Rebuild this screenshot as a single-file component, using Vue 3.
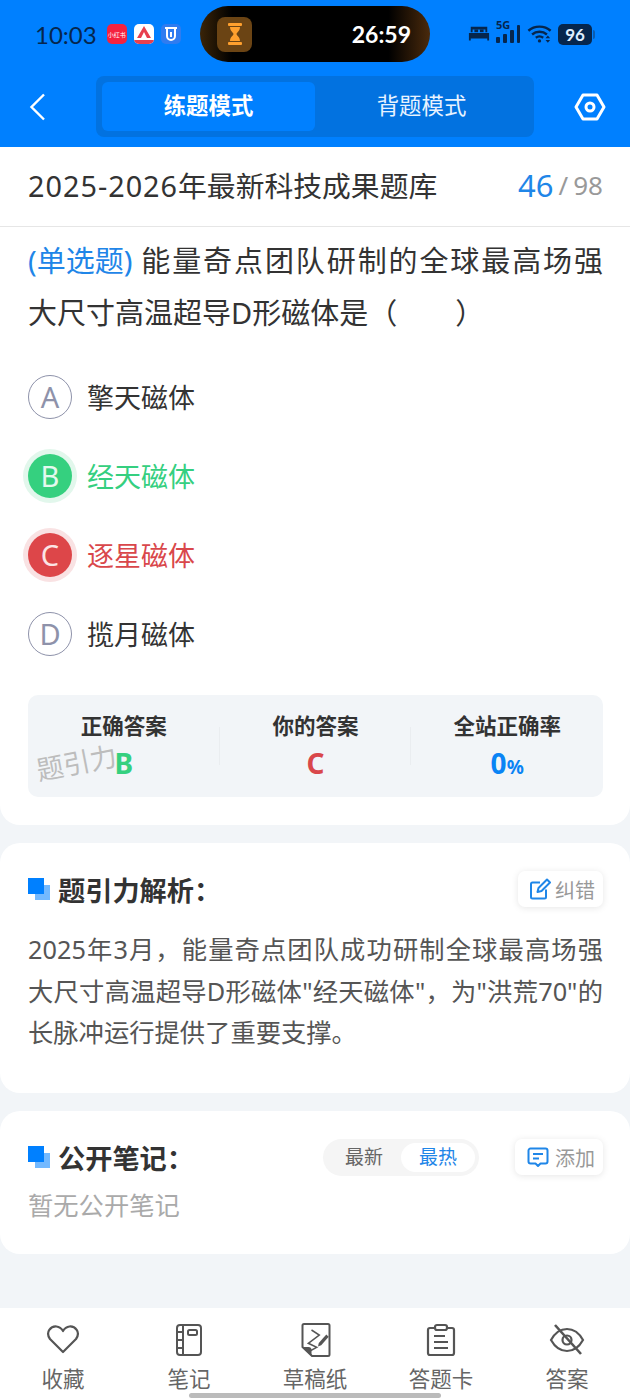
<template>
  <div class="page">
    <header class="header">
      <div class="status">
        <div class="status-left">
          <span class="clock">10:03</span>
          <span class="app app-red">小红书</span>
          <span class="app app-white">
            <svg width="20" height="20" viewBox="0 0 20 20">
              <path d="M3 14 L10 2 L17 14 L13 14 L10 8 L7 14 Z" fill="#e8404f" />
              <rect x="0" y="16" width="20" height="4" fill="#e8404f" />
            </svg>
          </span>
          <span class="app app-blue">
            <svg width="20" height="20" viewBox="0 0 20 20" fill="none" stroke="#fff" stroke-width="2">
              <path d="M4 4h12M6 5v7a4 4 0 0 0 8 0V5" />
              <path d="M10 8v5" />
            </svg>
          </span>
        </div>
        <div class="island">
          <span class="timer-tile">
            <svg width="16" height="22" viewBox="0 0 16 22" fill="#ffa02e">
              <rect x="1" y="0" width="14" height="3" rx="1" />
              <rect x="1" y="19" width="14" height="3" rx="1" />
              <path d="M3 4h10c0 4-3 5-3.500 7 .5 2 3.500 3 3.500 7H3c0-4 3-5 3.500-7C6 9 3 8 3 4z" />
            </svg>
          </span>
          <span class="timer">26:59</span>
        </div>
        <div class="status-right">
          <svg width="22" height="20" viewBox="0 0 24 20" fill="#06264d">
            <path d="M3 2h18v6h-2V5H5v3H3z" />
            <rect x="7" y="5" width="4" height="3" />
            <rect x="13" y="5" width="4" height="3" />
            <path d="M1 9h22v8h-2v-2H3v2H1z" />
          </svg>
          <span class="signal">
            <span class="five-g">5G</span>
            <svg width="25" height="20" viewBox="0 0 25 20" fill="#06264d">
              <rect x="0" y="13" width="4" height="6" rx="1" />
              <rect x="7" y="10" width="4" height="9" rx="1" />
              <rect x="14" y="6" width="4" height="13" rx="1" />
              <rect x="21" y="1" width="3" height="18" rx="1" />
            </svg>
          </span>
          <svg width="25" height="22" viewBox="0 0 27 22" fill="none" stroke="#06264d" stroke-width="2.600">
            <path d="M1.500 7.500C8 1.500 19 1.500 25.500 7.500" />
            <path d="M5.500 11.500c4.500-3.800 11.500-3.800 16 0" />
            <path d="M9.500 15c2.500-1.800 5.500-1.800 8 0" />
            <circle cx="13.500" cy="18.500" r="1.800" fill="#06264d" stroke="none" />
            <path d="M20 15.500l2.500-3 2.500 3zM20 17.500l2.500 3 2.500-3z" fill="#06264d" stroke="none" />
          </svg>
          <span class="battery">96</span>
        </div>
      </div>
      <nav class="nav">
        <button class="icon-btn">
          <svg width="18" height="28" viewBox="0 0 18 28" fill="none" stroke="#fff" stroke-width="2.400">
            <path d="M15 1.500 L2.500 14 L15 26.500" />
          </svg>
        </button>
        <div class="segment">
          <span class="seg-item active">练题模式</span>
          <span class="seg-item">背题模式</span>
        </div>
        <button class="icon-btn">
          <svg width="32" height="28" viewBox="0 0 32 28" fill="none" stroke="#fff" stroke-width="3">
            <path d="M9 2h14l7 12-7 12H9L2 14z" stroke-linejoin="round" />
            <circle cx="16" cy="14" r="4" />
          </svg>
        </button>
      </nav>
    </header>

    <section class="card question-card">
      <div class="title-row">
        <h1><span class="nums">2025-2026</span>年最新科技成果题库</h1>
        <div class="progress"><b>46</b><i>/</i><span>98</span></div>
      </div>
      <div class="question">
        <p class="stem"><span class="kind">(单选题)</span>能量奇点团队研制的全球最高场强大尺寸高温超导D形磁体是（&emsp;&emsp;）</p>
        <ul class="options">
          <li v-for="o in options" :key="o.key" class="option" :class="o.state">
            <span class="dot">{{ o.key }}</span>
            <span>{{ o.text }}</span>
          </li>
        </ul>
        <div class="stats">
          <span class="watermark">题引力</span>
          <div class="stat">
            <label>正确答案</label>
            <strong class="green">B</strong>
          </div>
          <div class="stat">
            <label>你的答案</label>
            <strong class="red">C</strong>
          </div>
          <div class="stat">
            <label>全站正确率</label>
            <strong class="blue">0<small>%</small></strong>
          </div>
        </div>
      </div>
    </section>

    <section class="card analysis">
      <div class="card-head">
        <h2><span class="mark"></span>题引力解析：</h2>
        <button class="mini-btn">
          <svg width="22" height="22" viewBox="0 0 22 22" fill="none" stroke="#1f86e8" stroke-width="2">
            <path d="M17 11.500V19a1.500 1.500 0 0 1-1.500 1.500h-12A1.500 1.500 0 0 1 2 19V6a1.500 1.500 0 0 1 1.500-1.500H11" />
            <path d="M8.500 14l1-4L18 1.500l3 3L12.500 13z" stroke-linejoin="round" />
          </svg>
          纠错
        </button>
      </div>
      <p class="analysis-text">2025年3月，能量奇点团队成功研制全球最高场强大尺寸高温超导D形磁体"经天磁体"，为"洪荒70"的长脉冲运行提供了重要支撑。</p>
    </section>

    <section class="card notes">
      <div class="card-head">
        <h2><span class="mark"></span>公开笔记：</h2>
        <div class="head-right">
          <div class="sort">
            <span>最新</span>
            <span class="on">最热</span>
          </div>
          <button class="mini-btn add-btn">
            <svg width="22" height="22" viewBox="0 0 22 22" fill="none" stroke="#1f86e8" stroke-width="2">
              <path d="M3.500 2.500h15a2 2 0 0 1 2 2v11a2 2 0 0 1-2 2h-5l-2.500 2.500-2.500-2.500h-5a2 2 0 0 1-2-2v-11a2 2 0 0 1 2-2z" stroke-linejoin="round" />
              <path d="M6 8h10M6 12.500h6" />
            </svg>
            添加
          </button>
        </div>
      </div>
      <p class="empty">暂无公开笔记</p>
    </section>

    <footer class="tabbar">
      <div class="tab">
        <svg width="34" height="34" viewBox="0 0 34 34" fill="none" stroke="#555" stroke-width="2.200">
          <path d="M17 29 L4 16 C-1 9 5 3 10.500 3.500 C13.500 3.800 15.500 5.500 17 8 C18.500 5.500 20.500 3.800 23.500 3.500 C29 3 35 9 30 16 Z" stroke-linejoin="round" />
        </svg>
        <span>收藏</span>
      </div>
      <div class="tab">
        <svg width="34" height="34" viewBox="0 0 34 34" fill="none" stroke="#555" stroke-width="2">
          <rect x="5" y="2" width="24" height="30" rx="3" />
          <path d="M11 2v30M5 9h6M5 17h6M5 25h6" />
          <rect x="16" y="7" width="9" height="5" rx="1.500" />
        </svg>
        <span>笔记</span>
      </div>
      <div class="tab">
        <svg width="34" height="34" viewBox="0 0 34 34" fill="none" stroke="#555" stroke-width="2">
          <path d="M6 1h24a1.500 1.500 0 0 1 1.500 1.500v29a1.500 1.500 0 0 1-1.500 1.500H14L4.500 24V2.500A1.500 1.500 0 0 1 6 1z" stroke-linejoin="round" />
          <path d="M4.500 24h6a3 3 0 0 1 3 3v6z" fill="#555" stroke="none" />
          <path d="M13.500 7 L21.300 12 L10.300 20.300 L18.700 24.300 L10 29" stroke-width="1.500" />
          <path d="M20 23.500l.8-3.500 7.500-8.500 2.400 2.200-7.500 8.500z" fill="#555" stroke="none" />
        </svg>
        <span>草稿纸</span>
      </div>
      <div class="tab">
        <svg width="34" height="34" viewBox="0 0 34 34" fill="none" stroke="#555" stroke-width="2.200">
          <path d="M10 5H6a2 2 0 0 0-2 2v23a2 2 0 0 0 2 2h22a2 2 0 0 0 2-2V7a2 2 0 0 0-2-2h-4" />
          <rect x="11" y="2" width="12" height="5" rx="2" />
          <path d="M10 13h11M10 19h14M10 25h14" />
        </svg>
        <span>答题卡</span>
      </div>
      <div class="tab">
        <svg width="36" height="34" viewBox="0 0 36 34" fill="none" stroke="#555" stroke-width="2.200">
          <path d="M2 17C7 8 12 6 18 6s11 2 16 11c-5 9-10 11-16 11S7 26 2 17z" />
          <circle cx="18" cy="17" r="4.500" />
          <path d="M6 2 L32 31" stroke-width="2.600" />
        </svg>
        <span>答案</span>
      </div>
      <span class="home-bar"></span>
    </footer>
  </div>
</template>

<script setup>
const options = [
  { key: 'A', text: '擎天磁体', state: '' },
  { key: 'B', text: '经天磁体', state: 'right' },
  { key: 'C', text: '逐星磁体', state: 'wrong' },
  { key: 'D', text: '揽月磁体', state: '' }
]
</script>

<style>
html, body {
  margin: 0;
  background: #f2f5f8;
}
</style>

<style scoped>
.page {
  position: relative;
  width: 630px;
  height: 1400px;
  overflow: hidden;
  display: flex;
  flex-direction: column;
  background: #f2f5f8;
  color: #333;
  font-family: "Noto Sans", "Noto Sans CJK SC", sans-serif;
}

.header {
  height: 147px;
  flex-shrink: 0;
  background: #0080ff;
}

.status {
  height: 76px;
  box-sizing: border-box;
  padding: 6px 38px 0 35px;
  display: flex;
  align-items: flex-start;
}

.status-left {
  flex: 0 0 165px;
  height: 56px;
  display: flex;
  align-items: center;
  font-family: Lato, sans-serif;
}

.clock {
  font-size: 24px;
  color: #06264d;
  margin-right: 10px;
  white-space: nowrap;
}

.app {
  width: 20px;
  height: 20px;
  margin-right: 7px;
  border-radius: 5px;
  flex-shrink: 0;
  overflow: hidden;
  display: flex;
  align-items: center;
  justify-content: center;
}

.app-red {
  background: #f5223f;
  color: #fff;
  font-size: 6px;
  white-space: nowrap;
  font-family: "Noto Sans CJK SC", sans-serif;
}

.app-white {
  background: #fff;
}

.app-blue {
  background: #2f7cf0;
}

.island {
  width: 230px;
  height: 56px;
  box-sizing: border-box;
  padding: 0 19px 0 17px;
  border-radius: 28px;
  background: linear-gradient(90deg, #3a2408 0, #000 14%, #000 82%, #4a2a0c 100%);
  display: flex;
  align-items: center;
  justify-content: space-between;
}

.timer-tile {
  width: 35px;
  height: 35px;
  border-radius: 8px;
  background: #6b4414;
  display: flex;
  align-items: center;
  justify-content: center;
}

.timer {
  font-family: Lato, sans-serif;
  font-size: 23px;
  font-weight: 700;
  color: #fff;
}

.status-right {
  height: 56px;
  margin-left: auto;
  display: flex;
  align-items: center;
  gap: 6px;
}

.signal {
  position: relative;
  display: flex;
}

.five-g {
  position: absolute;
  left: 0;
  top: -7px;
  font-size: 11px;
  font-weight: 700;
  color: #06264d;
}

.battery {
  position: relative;
  width: 34px;
  height: 21px;
  border-radius: 5px;
  background: #06264d;
  color: #dfeeff;
  font-family: Lato, sans-serif;
  font-size: 17px;
  font-weight: 700;
  line-height: 21px;
  text-align: center;
}

.battery::after {
  content: '';
  position: absolute;
  right: -3px;
  top: 6px;
  width: 2px;
  height: 9px;
  border-radius: 0 2px 2px 0;
  background: #0a5cb0;
}

.nav {
  height: 61px;
  display: flex;
  align-items: center;
  justify-content: space-between;
  padding: 0 25px 0 29px;
}

.icon-btn {
  padding: 0;
  border: 0;
  background: none;
  display: flex;
}

.segment {
  width: 438px;
  height: 61px;
  box-sizing: border-box;
  margin-left: 49px;
  margin-right: 40px;
  padding: 6px;
  flex-shrink: 0;
  border-radius: 8px;
  background: #0272e0;
  display: flex;
}

.seg-item {
  flex: 1;
  border-radius: 6px;
  color: #e8f3ff;
  font-size: 22.400px;
  line-height: 47px;
  text-align: center;
}

.seg-item.active {
  background: #0080ff;
  color: #fff;
  font-weight: 700;
}

.card {
  background: #fff;
  border-radius: 20px;
}

.question-card {
  height: 678px;
  flex-shrink: 0;
  border-radius: 0 0 20px 20px;
}

.title-row {
  height: 80px;
  box-sizing: border-box;
  padding: 0 27px 4px 28px;
  border-bottom: 1px solid #e6e6e6;
  display: flex;
  align-items: center;
  justify-content: space-between;
}

h1 {
  margin: 0;
  font-size: 28.800px;
  font-weight: 400;
  color: #333;
}

.nums {
  letter-spacing: 1px;
}

.progress {
  display: flex;
  align-items: center;
  color: #999;
  font-size: 26px;
}

.progress b {
  font-size: 31px;
  font-weight: 400;
  color: #1f86e8;
}

.progress i {
  margin: 0 5px;
  font-style: normal;
}

.question {
  padding: 8px 27px 0 28px;
}

.stem {
  margin: 0;
  font-size: 29px;
  line-height: 52px;
  text-align: justify;
  color: #333;
}

.kind {
  display: inline-block;
  color: #1f86e8;
  margin-right: 7px;
}

.options {
  list-style: none;
  margin: 18px 0 0;
  padding: 0;
}

.option {
  height: 79px;
  display: flex;
  align-items: center;
  gap: 15px;
  font-size: 27px;
  color: #333;
}

.dot {
  width: 44px;
  height: 44px;
  box-sizing: border-box;
  flex-shrink: 0;
  border: 1px solid #8e92aa;
  border-radius: 50%;
  color: #8e92aa;
  font-size: 29px;
  line-height: 42px;
  text-align: center;
}

.right {
  color: #35cf80;
}

.right .dot {
  border: 0;
  background: #35d07f;
  color: #e4f9ee;
  line-height: 44px;
  box-shadow: 0 0 0 5px #e2f7ec;
}

.wrong {
  color: #d9474b;
}

.wrong .dot {
  border: 0;
  background: #dd4649;
  color: #fbe4e4;
  line-height: 44px;
  box-shadow: 0 0 0 5px #f9e2e3;
}

.stats {
  position: relative;
  height: 102px;
  margin-top: 22px;
  padding: 16px 0 0;
  box-sizing: border-box;
  border-radius: 10px;
  background: #f2f5f8;
  display: flex;
}

.stat {
  position: relative;
  flex: 1;
  height: 74px;
  display: flex;
  flex-direction: column;
  align-items: center;
}

.stat:not(:last-child)::after {
  content: '';
  position: absolute;
  right: 0;
  top: 16px;
  width: 1px;
  height: 38px;
  background: #eaedf0;
}

.stat label {
  font-size: 21.500px;
  font-weight: 700;
  line-height: 30px;
  color: #333;
}

.stat strong {
  font-size: 28px;
  line-height: 44px;
}

.stat small {
  font-size: 19px;
}

.green {
  color: #35d07f;
}

.red {
  color: #d9474b;
}

.blue {
  color: #0a84f5;
}

.watermark {
  position: absolute;
  left: 8px;
  top: 52px;
  font-size: 27px;
  line-height: 32px;
  color: #bdbdbd;
  transform: rotate(-11deg);
}

.analysis {
  height: 250px;
  flex-shrink: 0;
  margin-top: 18px;
  padding: 28px 27px 0 28px;
  box-sizing: border-box;
}

.notes {
  height: 143px;
  flex-shrink: 0;
  margin-top: 18px;
  padding: 28px 27px 0 28px;
  box-sizing: border-box;
}

.card-head {
  height: 36px;
  display: flex;
  align-items: center;
  justify-content: space-between;
}

h2 {
  margin: 0;
  display: flex;
  align-items: center;
  font-size: 27.200px;
  font-weight: 700;
  color: #333;
}

.mark {
  position: relative;
  width: 16px;
  height: 16px;
  margin: 0 14px 6px 0;
  background: #0080ff;
}

.mark::after {
  content: '';
  position: absolute;
  left: 7px;
  top: 7px;
  width: 15px;
  height: 15px;
  background: rgba(0, 128, 255, 0.55);
}

.mini-btn {
  height: 36px;
  padding: 0 8px 0 11px;
  border: 0;
  border-radius: 7px;
  background: #fff;
  box-shadow: 0 1px 7px rgba(0, 0, 0, 0.1);
  color: #999;
  font: inherit;
  font-size: 20px;
  display: flex;
  align-items: center;
  gap: 4px;
}

.add-btn {
  padding-left: 12px;
  gap: 6px;
}

.analysis-text {
  margin: 22px 0 0;
  font-size: 25.300px;
  line-height: 41.500px;
  text-align: justify;
  color: #555;
}

.head-right {
  display: flex;
  align-items: center;
  gap: 36px;
}

.sort {
  width: 156px;
  height: 37px;
  box-sizing: border-box;
  padding: 4px;
  border-radius: 19px;
  background: #f5f5f5;
  display: flex;
  justify-content: space-between;
  font-size: 19px;
  line-height: 29px;
  color: #666;
}

.sort span {
  width: 74px;
  text-align: center;
  border-radius: 15px;
}

.sort .on {
  background: #fff;
  color: #1f86e8;
}

.empty {
  margin: 11px 0 0;
  font-size: 25.300px;
  color: #aaa;
}

.tabbar {
  margin-top: auto;
  height: 92px;
  flex-shrink: 0;
  background: #fff;
  display: flex;
}

.tab {
  flex: 1;
  padding-top: 15px;
  display: flex;
  flex-direction: column;
  align-items: center;
  gap: 7px;
  font-size: 21.500px;
  line-height: 29px;
  color: #666;
}

.home-bar {
  position: absolute;
  left: 189px;
  bottom: 2px;
  width: 252px;
  height: 5px;
  border-radius: 3px;
  background: #bbb;
}
</style>
